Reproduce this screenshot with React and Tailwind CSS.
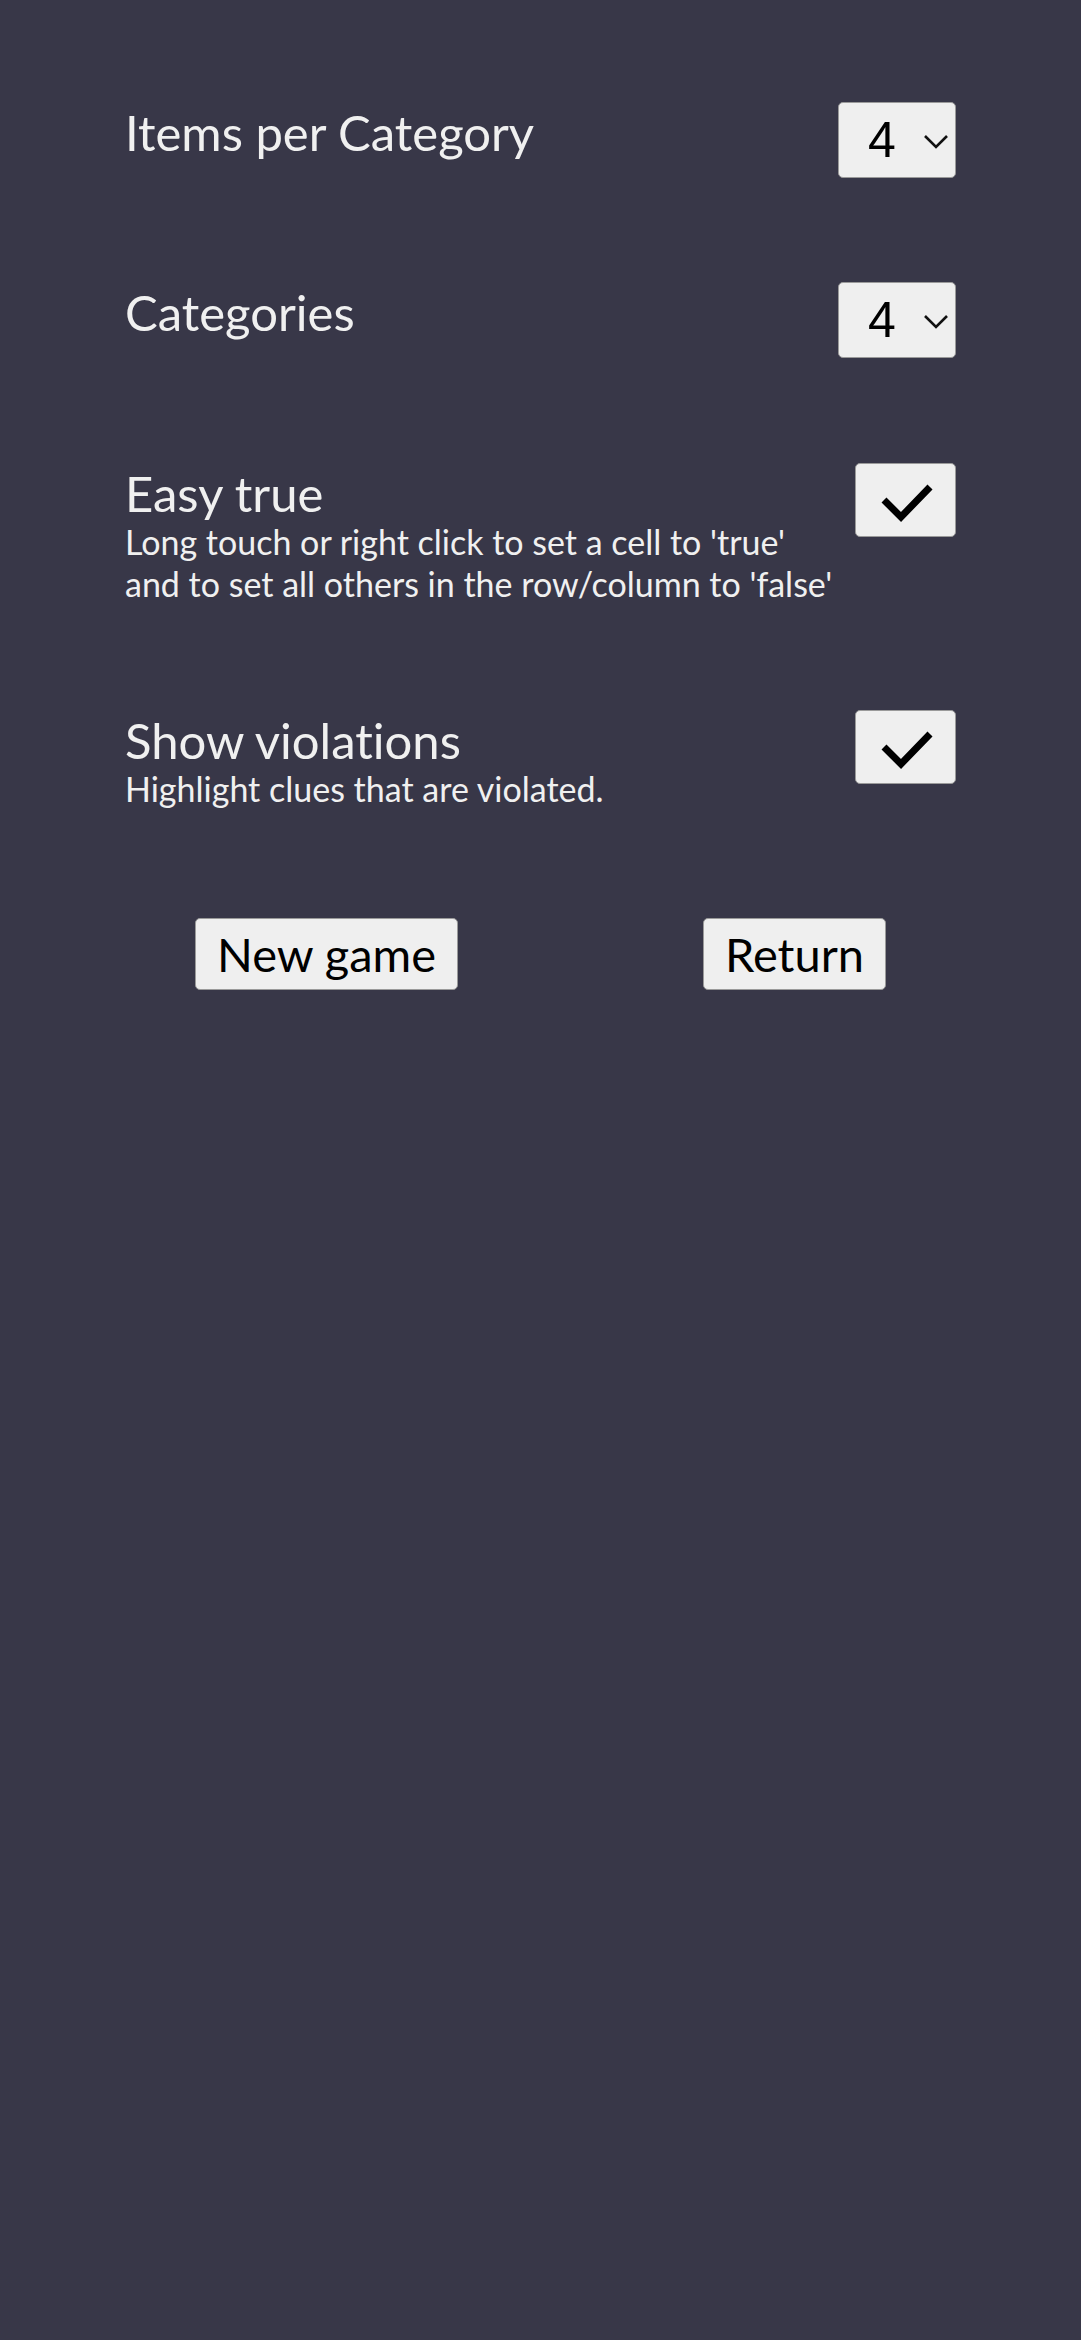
const Chevron = () => (
  <svg width="26" height="16" viewBox="0 0 26 16" fill="none">
    <path d="M2 2 L13 13 L24 2" stroke="#111" strokeWidth="2.6" />
  </svg>
);

const Check = () => (
  <svg width="101" height="74" viewBox="0 0 101 74" fill="none" className="absolute inset-0">
    <path d="M28 36 L45 53 L74 23" stroke="#000" strokeWidth="7" />
  </svg>
);

const NumberSelect = ({ value }) => (
  <div className="relative flex h-[76px] w-[118px] shrink-0 items-center rounded-[5px] border border-[#9a9a9a] bg-[#efefef] pl-[29px]">
    <span className="font-['Liberation_Sans',Arial,sans-serif] text-[50px] leading-none text-black">
      {value}
    </span>
    <span className="ml-[27px] mt-[4px]">
      <Chevron />
    </span>
  </div>
);

const CheckBox = () => (
  <div className="relative h-[74px] w-[101px] shrink-0 rounded-[5px] border border-[#9a9a9a] bg-[#efefef]">
    <Check />
  </div>
);

const Title = ({ children }) => (
  <div className="mt-[2px] text-[49px] leading-[56px] text-[#f0f0f0]">{children}</div>
);

const Note = ({ children }) => (
  <div className="text-[34px] leading-[42px] text-[#f0f0f0]">{children}</div>
);

const App = () => {
  return (
    <div className="min-h-[2340px] w-full bg-[#383748] font-['Lato','Open_Sans',sans-serif] [font-variant-ligatures:none]">
      <div className="flex flex-col px-[125px] pt-[102px]">
        {/* Items per category */}
        <div className="flex h-[180px] items-start justify-between">
          <Title>Items per Category</Title>
          <NumberSelect value="4" />
        </div>

        {/* Categories */}
        <div className="flex h-[181px] items-start justify-between">
          <Title>Categories</Title>
          <NumberSelect value="4" />
        </div>

        {/* Easy true */}
        <div className="flex h-[247px] items-start justify-between">
          <div>
            <Title>Easy true</Title>
            <Note>Long touch or right click to set a cell to 'true'</Note>
            <Note>and to set all others in the row/column to 'false'</Note>
          </div>
          <CheckBox />
        </div>

        {/* Show violations */}
        <div className="flex h-[208px] items-start justify-between">
          <div>
            <Title>Show violations</Title>
            <Note>Highlight clues that are violated.</Note>
          </div>
          <CheckBox />
        </div>

        {/* Buttons */}
        <div className="flex items-start justify-between px-[70px]">
          <button className="h-[72px] rounded-[5px] border border-[#9a9a9a] bg-[#efefef] px-[21px] text-[47px] leading-none text-black">
            New game
          </button>
          <button className="h-[72px] rounded-[5px] border border-[#9a9a9a] bg-[#efefef] px-[21px] text-[47px] leading-none text-black">
            Return
          </button>
        </div>
      </div>
    </div>
  );
};

export default App;
